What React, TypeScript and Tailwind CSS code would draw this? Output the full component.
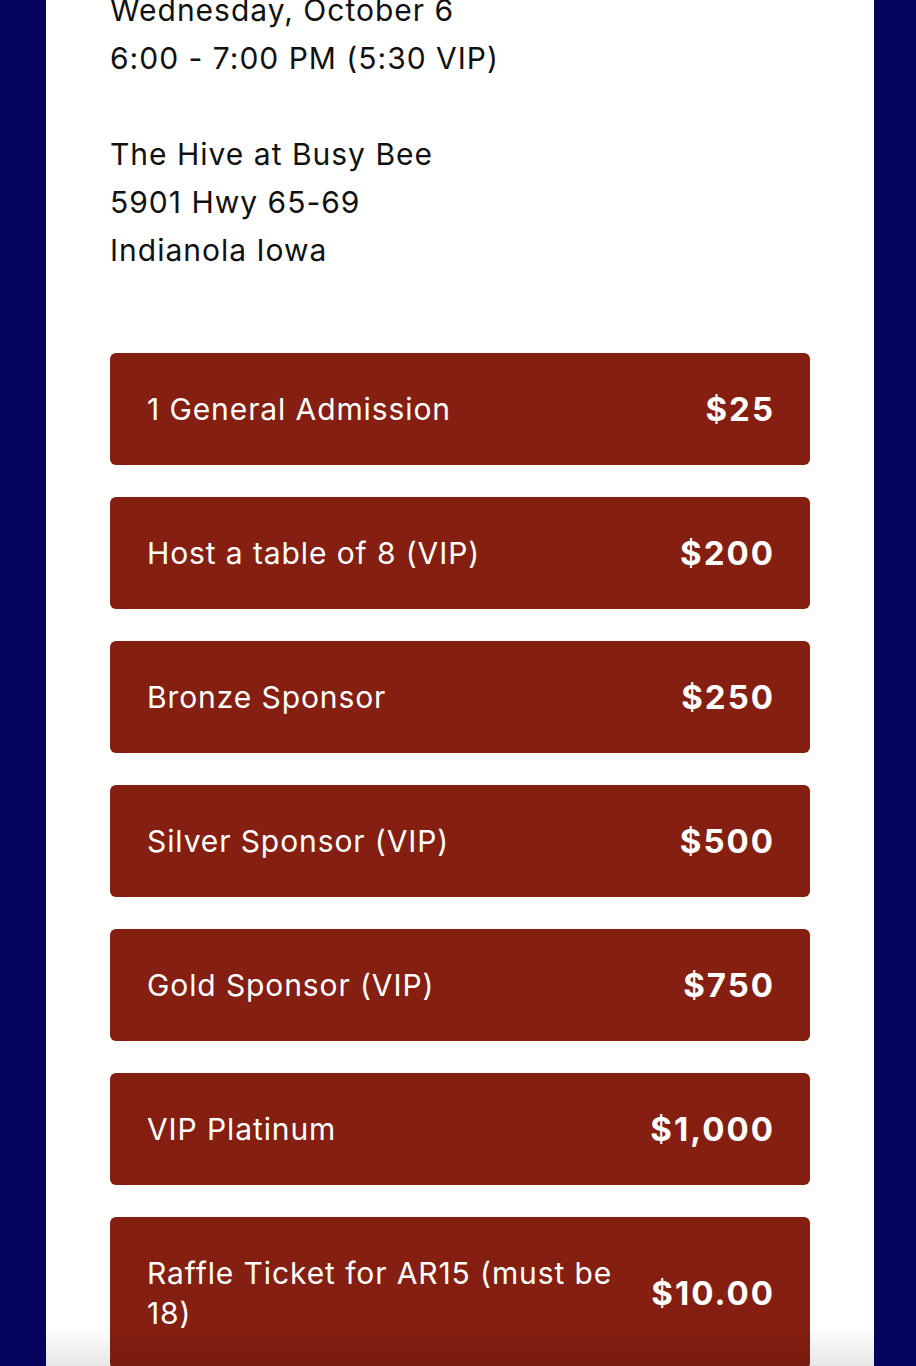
import React from 'react';

const tickets = [
    { name: '1 General Admission', price: '$25' },
    { name: 'Host a table of 8 (VIP)', price: '$200' },
    { name: 'Bronze Sponsor', price: '$250' },
    { name: 'Silver Sponsor (VIP)', price: '$500' },
    { name: 'Gold Sponsor (VIP)', price: '$750' },
    { name: 'VIP Platinum', price: '$1,000' },
    { name: 'Raffle Ticket for AR15 (must be 18)', price: '$10.00' },
];

export default function App() {
    return (
        <div className="h-[1366px] overflow-hidden bg-[#04045f] pl-[46px] pr-[42px] font-['Inter','Liberation_Sans',sans-serif]">
            <div className="relative flex h-full flex-col bg-white px-[64px]">
                {/* Event details */}
                <div className="-mt-[14px] text-[30px] leading-[48px] text-[#111111] tracking-[1px]">
                    <p>Wednesday, October 6</p>
                    <p>6:00 - 7:00 PM (5:30 VIP)</p>
                    <p>&nbsp;</p>
                    <p>The Hive at Busy Bee</p>
                    <p>5901 Hwy 65-69</p>
                    <p>Indianola Iowa</p>
                </div>

                {/* Ticket options */}
                <div className="mt-[79px] flex flex-col gap-[32px]">
                    {tickets.map(t => (
                        <button
                            key={t.name}
                            className="flex w-full items-center justify-between gap-6 rounded-[6px] bg-[#851f11] pl-[37px] pr-[35px] py-[36px] text-left text-white"
                        >
                            <span className="max-w-[480px] text-[30px] leading-[40px] tracking-[0.9px]">{t.name}</span>
                            <span className="shrink-0 text-[33px] font-bold leading-[40px] tracking-[2px]">{t.price}</span>
                        </button>
                    ))}
                </div>

                {/* Bottom fade */}
                <div className="pointer-events-none absolute bottom-0 left-0 right-0 h-[40px] bg-gradient-to-b from-transparent to-black/10" />
            </div>
        </div>
    );
}
